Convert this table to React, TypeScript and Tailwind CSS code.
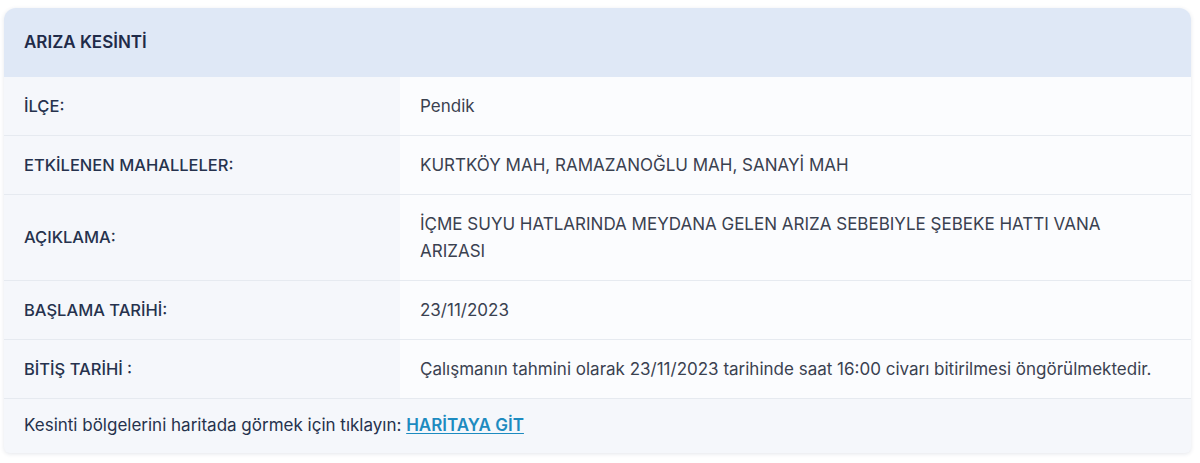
import React from "react";

type Row = { label: string; value: string; narrow?: boolean };

const rows: Row[] = [
  { label: "İLÇE:", value: "Pendik" },
  { label: "ETKİLENEN MAHALLELER:", value: "KURTKÖY MAH, RAMAZANOĞLU MAH, SANAYİ MAH" },
  {
    label: "AÇIKLAMA:",
    value: "İÇME SUYU HATLARINDA MEYDANA GELEN ARIZA SEBEBIYLE ŞEBEKE HATTI VANA ARIZASI",
    narrow: true,
  },
  { label: "BAŞLAMA TARİHİ:", value: "23/11/2023" },
  {
    label: "BİTİŞ TARİHİ :",
    value: "Çalışmanın tahmini olarak 23/11/2023 tarihinde saat 16:00 civarı bitirilmesi öngörülmektedir.",
  },
];

const App = () => {
  return (
    <div className="w-[1200px] h-[463px] bg-white pt-2 pl-1 font-['Inter','Noto_Sans',sans-serif]">
      <div className="w-[1187px] rounded-t-xl rounded-b-md overflow-hidden bg-[#f5f7fb] shadow-[0_1px_4px_rgba(30,50,90,0.12)]">
        <div className="h-[69px] flex items-center px-5 bg-[#dfe8f6] text-[17px] font-semibold text-[#1f2b49]">
          ARIZA KESİNTİ
        </div>
        {rows.map((r, i) => (
          <div key={i} className="grid grid-cols-[396px_1fr] border-b border-[#e6eaf0]">
            <div className="flex items-center px-5 py-[15.5px] text-[16.5px] font-medium text-[#26324d] leading-[27px]">
              {r.label}
            </div>
            <div className="flex items-center pl-5 pr-4 py-[15.5px] bg-[#fbfcfe] text-[17px] text-[#3a4150] leading-[27px]">
              <span className={r.narrow ? "max-w-[695px]" : ""}>{r.value}</span>
            </div>
          </div>
        ))}
        <div className="h-[54px] flex items-center px-5 text-[17px] text-[#26324d]">
          Kesinti bölgelerini haritada görmek için tıklayın:&nbsp;
          <a href="#" className="font-semibold text-[#1d8bc0] underline underline-offset-2">
            HARİTAYA GİT
          </a>
        </div>
      </div>
    </div>
  );
};

export default App;
